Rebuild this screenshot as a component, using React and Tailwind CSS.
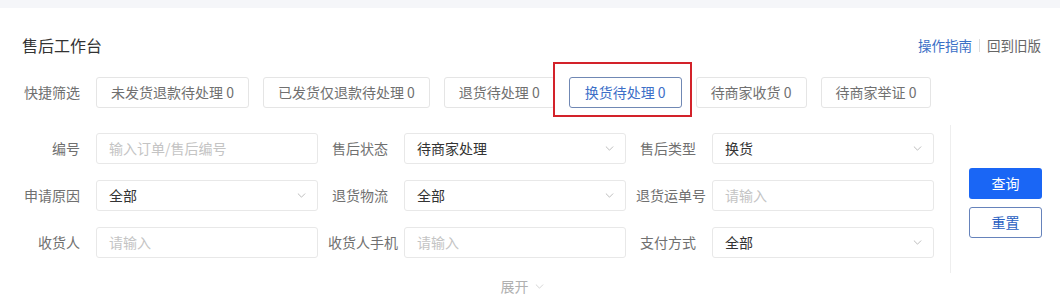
import React from 'react';

const quickFilters = [
  '未发货退款待处理 0',
  '已发货仅退款待处理 0',
  '退货待处理 0',
  '换货待处理 0',
  '待商家收货 0',
  '待商家举证 0',
];

const fields = [
  { label: '编号', placeholder: '输入订单/售后编号' },
  { label: '售后状态', value: '待商家处理', select: true },
  { label: '售后类型', value: '换货', select: true },
  { label: '申请原因', value: '全部', select: true },
  { label: '退货物流', value: '全部', select: true },
  { label: '退货运单号', placeholder: '请输入', long: true },
  { label: '收货人', placeholder: '请输入' },
  { label: '收货人手机', placeholder: '请输入', long: true },
  { label: '支付方式', value: '全部', select: true },
];

function Chevron({ className }) {
  return (
    <svg viewBox="0 0 10 6" className={className} fill="none">
      <path d="M1 1l4 4 4-4" stroke="currentColor" strokeWidth="1" strokeLinecap="round" strokeLinejoin="round" />
    </svg>
  );
}

function Field({ label, placeholder, value, select, long }) {
  return (
    <div className="flex items-center">
      <div
        className={
          'w-[86px] shrink-0 whitespace-nowrap text-right text-[14px] text-[#707070] ' +
          (long ? 'pr-[6px]' : 'pr-4')
        }
      >
        {label}
      </div>
      <div className="flex h-[31px] flex-1 items-center justify-between rounded-[3px] border border-[#e8e8e8] bg-white pl-3 pr-[11px] text-[14px]">
        {value ? (
          <span className="text-[#333]">{value}</span>
        ) : (
          <span className="text-[#c4c4c4]">{placeholder}</span>
        )}
        {select && <Chevron className="h-[5px] w-[9px] text-[#b0b0b0]" />}
      </div>
    </div>
  );
}

export default function App() {
  return (
    <div className="h-[300px] w-[1060px] overflow-hidden bg-white font-['Noto_Sans_CJK_SC','Liberation_Sans',sans-serif]">
      <div className="h-2 bg-[#f5f6f9]" />

      <div className="flex items-center justify-between pl-[22px] pr-[19px] pt-[25px]">
        <h1 className="text-[16px] leading-6 text-[#333]">售后工作台</h1>
        <div className="flex items-center text-[13.5px] leading-6">
          <a className="text-[#3b6fc6]">操作指南</a>
          <span className="mx-[7px] h-[13px] w-px bg-[#ddd]" />
          <a className="text-[#666]">回到旧版</a>
        </div>
      </div>

      <div className="mt-5 flex items-center pl-[10px]">
        <div className="w-[86px] pr-4 text-right text-[14px] text-[#707070]">快捷筛选</div>
        <div className="flex items-center gap-[14px]">
          {quickFilters.map((f, i) =>
            i === 3 ? (
              <div key={f} className="relative">
                <button className="h-[31px] rounded-[3px] border border-[#7088b4] bg-white px-[15px] text-[14px] text-[#3d6fc8]">
                  {f}
                </button>
                <span className="pointer-events-none absolute -bottom-[9px] -left-4 -right-[10px] -top-[15px] border-2 border-[#d3222a]" />
              </div>
            ) : (
              <button
                key={f}
                className="h-[31px] rounded-[3px] border border-[#e5e5e5] bg-white px-[14px] text-[14px] text-[#707070]"
              >
                {f}
              </button>
            )
          )}
        </div>
      </div>

      <div className="mt-[17px] flex pl-[10px]">
        <div className="grid grid-cols-[repeat(3,308px)] gap-y-4 pt-2 pb-[15px]">
          {fields.map((f) => (
            <Field key={f.label} {...f} />
          ))}
        </div>
        <div className="ml-4 w-px self-stretch bg-[#eeeeee]" />
        <div className="ml-[18px] flex w-[73px] flex-col gap-2 pt-[43px]">
          <button className="h-[31px] rounded-[3px] bg-[#1a66f5] text-[14px] text-white">查询</button>
          <button className="h-[31px] rounded-[3px] border border-[#6683bb] bg-white text-[14px] text-[#2a5fc2]">
            重置
          </button>
        </div>
      </div>

      <div className="mt-[3px] flex items-center justify-center gap-[6px] pr-[16px] text-[14px] leading-5 text-[#b0b0b0]">
        <span>展开</span>
        <Chevron className="h-[5px] w-[9px] text-[#ccc]" />
      </div>
    </div>
  );
}
